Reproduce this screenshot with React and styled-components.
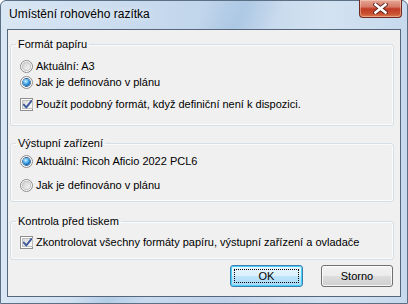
import React from 'react';
import styled, { createGlobalStyle } from 'styled-components';

const Global = createGlobalStyle`
  html, body { margin: 0; padding: 0; }
  body {
    width: 408px; height: 304px; overflow: hidden;
    font-family: "Liberation Sans", Arial, sans-serif;
    font-size: 11px; color: #000; background: #ffffff;
  }
`;

const Window = styled.div`
  box-sizing: border-box;
  width: 408px; height: 304px;
  display: flex; flex-direction: column;
  border: 1px solid #5b6f85;
  border-radius: 6px 6px 0 0;
  background:
    linear-gradient(115deg, rgba(255,255,255,0) 0%, rgba(255,255,255,0) 38%, rgba(150,185,220,0.45) 45%, rgba(255,255,255,0) 52%, rgba(255,255,255,0) 100%),
    linear-gradient(to right, #d9e6f3 0%, #cadcef 30%, #bed3ea 55%, #d3e2f1 80%, #c6d9ed 100%);
`;

const TitleBar = styled.div`
  height: 28px; flex: none;
  display: flex; align-items: flex-start;
  padding-left: 8px;
`;

const Title = styled.span`
  font-size: 12px;
  line-height: 16px;
  margin-top: 5px;
  text-shadow: 0 0 6px rgba(255,255,255,0.9);
`;

const CloseButton = styled.button`
  margin: -1px 5px 0 auto;
  width: 43px; height: 18px;
  padding: 0;
  display: flex; align-items: center; justify-content: center;
  border: 1px solid #6e2a22;
  border-top: none;
  border-radius: 0 0 4px 4px;
  background: linear-gradient(to bottom, #e6a898 0%, #d67a66 40%, #c13c26 52%, #c9502f 80%, #dc7a50 100%);
  box-shadow: inset 0 0 0 1px rgba(255,220,200,0.45);
`;

const Client = styled.div`
  flex: 1;
  margin: 0 6px 6px 6px;
  border: 1px solid #56677b;
  background: #f0f0f0;
  display: flex; flex-direction: column;
  padding: 6px 6px 0 2px;
`;

const Group = styled.fieldset`
  margin: ${p => p.$top}px 0 0 0;
  border: 1px solid #d5dfe5;
  border-radius: 3px;
  padding: ${p => p.$pt}px 5px ${p => p.$pb}px 5px;
  display: flex; flex-direction: column;
  box-shadow: inset 0 0 0 1px rgba(255,255,255,0.7);
`;

const Legend = styled.legend`
  padding: 0 2px;
  line-height: 16px;
  font-size: 11px;
`;

const Option = styled.label`
  display: flex; align-items: center;
  height: 16px;
  padding-left: 4px;
  gap: 3px;
  margin-top: ${p => p.$gap || 0}px;
  font-size: 11px;
  white-space: nowrap;
`;

const RadioCircle = styled.span`
  box-sizing: border-box;
  width: 13px; height: 13px; flex: none;
  border-radius: 50%;
  border: 1px solid #8d8d8d;
  background: radial-gradient(circle at 50% 50%, #ffffff 0%, #ffffff 30%, #f4f4f4 100%);
  display: flex; align-items: center; justify-content: center;
`;

const RadioInner = styled.span`
  width: 9px; height: 9px; border-radius: 50%;
  background: ${p => p.$on
    ? 'radial-gradient(circle at 40% 35%, #d7f1ff 0%, #57b6ee 35%, #1b72c2 65%, #124f8c 100%)'
    : 'linear-gradient(135deg, #cfcfcf 0%, #e4e4e4 50%, #f8f8f8 100%)'};
  box-shadow: ${p => p.$on ? '0 0 0 1px #2e5f8f' : 'inset 0 0 0 1px #c4c4c4'};
  transform: scale(${p => p.$on ? 0.8 : 1});
`;

const CheckBox = styled.span`
  box-sizing: border-box;
  width: 13px; height: 13px; flex: none;
  border: 1px solid #8f8f8f;
  background: #ffffff;
  padding: 1px;
  display: flex;
`;

const CheckInner = styled.span`
  flex: 1;
  display: flex; align-items: center; justify-content: center;
  background: linear-gradient(135deg, #d8d8d8 0%, #ececec 55%, #fbfbfb 100%);
  border: 1px solid #bdbdbd;
  box-sizing: border-box;
`;

const Buttons = styled.div`
  display: flex; justify-content: flex-end;
  gap: 18px;
  margin: 5px 1px 0 0;
`;

const Button = styled.button`
  box-sizing: border-box;
  width: ${p => p.$w}px; height: 22px;
  padding: 0;
  font-family: inherit; font-size: 11px; color: #000;
  border-radius: 3px;
  border: 1px solid ${p => p.$default ? '#3c7fb1' : '#707070'};
  background: ${p => p.$default
    ? 'linear-gradient(to bottom, #eaf6fd 0%, #d9f0fc 50%, #bee6fd 51%, #a7d9f5 100%)'
    : 'linear-gradient(to bottom, #f2f2f2 0%, #ebebeb 50%, #dddddd 51%, #cfcfcf 100%)'};
  box-shadow: inset 0 0 0 1px ${p => p.$default ? '#48d1f8' : 'rgba(255,255,255,0.8)'};
  display: flex; align-items: center; justify-content: center;
`;

const FocusRect = styled.span`
  flex: 1; align-self: stretch;
  margin: 3px;
  border: 1px dotted #000;
  display: flex; align-items: center; justify-content: center;
  line-height: 14px;
`;

function Radio({ on, children, gap }) {
  return (
    <Option $gap={gap}>
      <RadioCircle><RadioInner $on={on} /></RadioCircle>
      <span>{children}</span>
    </Option>
  );
}

function Check({ children, gap }) {
  return (
    <Option $gap={gap}>
      <CheckBox>
        <CheckInner>
          <svg width="9" height="9" viewBox="0 0 9 9">
            <path d="M0.8 4.6 L3.3 7.4 L8.3 1" fill="none" stroke="#3e5a9c" strokeWidth="1.9" strokeLinecap="round" strokeLinejoin="round" />
          </svg>
        </CheckInner>
      </CheckBox>
      <span>{children}</span>
    </Option>
  );
}

export default function App() {
  return (
    <>
      <Global />
      <Window>
        <TitleBar>
          <Title>Umístění rohového razítka</Title>
          <CloseButton aria-label="Zavřít">
            <svg width="15" height="11" viewBox="0 0 15 11">
              <path d="M2.5 1.5 L12.5 9.5 M12.5 1.5 L2.5 9.5" stroke="#5a1f18" strokeWidth="4.4" strokeLinecap="square" />
              <path d="M2.5 1.5 L12.5 9.5 M12.5 1.5 L2.5 9.5" stroke="#ffffff" strokeWidth="2.6" strokeLinecap="square" />
            </svg>
          </CloseButton>
        </TitleBar>
        <Client>
          <Group $top={0} $pt={6} $pb={13}>
            <Legend>Formát papíru</Legend>
            <Radio>Aktuální: A3</Radio>
            <Radio on>Jak je definováno v plánu</Radio>
            <Check gap={6}>Použít podobný formát, když definiční není k dispozici.</Check>
          </Group>
          <Group $top={9} $pt={2} $pb={8}>
            <Legend>Výstupní zařízení</Legend>
            <Radio on>Aktuální: Ricoh Aficio 2022 PCL6</Radio>
            <Radio gap={8}>Jak je definováno v plánu</Radio>
          </Group>
          <Group $top={11} $pt={5} $pb={9}>
            <Legend>Kontrola před tiskem</Legend>
            <Check>Zkontrolovat všechny formáty papíru, výstupní zařízení a ovladače</Check>
          </Group>
          <Buttons>
            <Button $default $w={73}><FocusRect>OK</FocusRect></Button>
            <Button $w={72}>Storno</Button>
          </Buttons>
        </Client>
      </Window>
    </>
  );
}
